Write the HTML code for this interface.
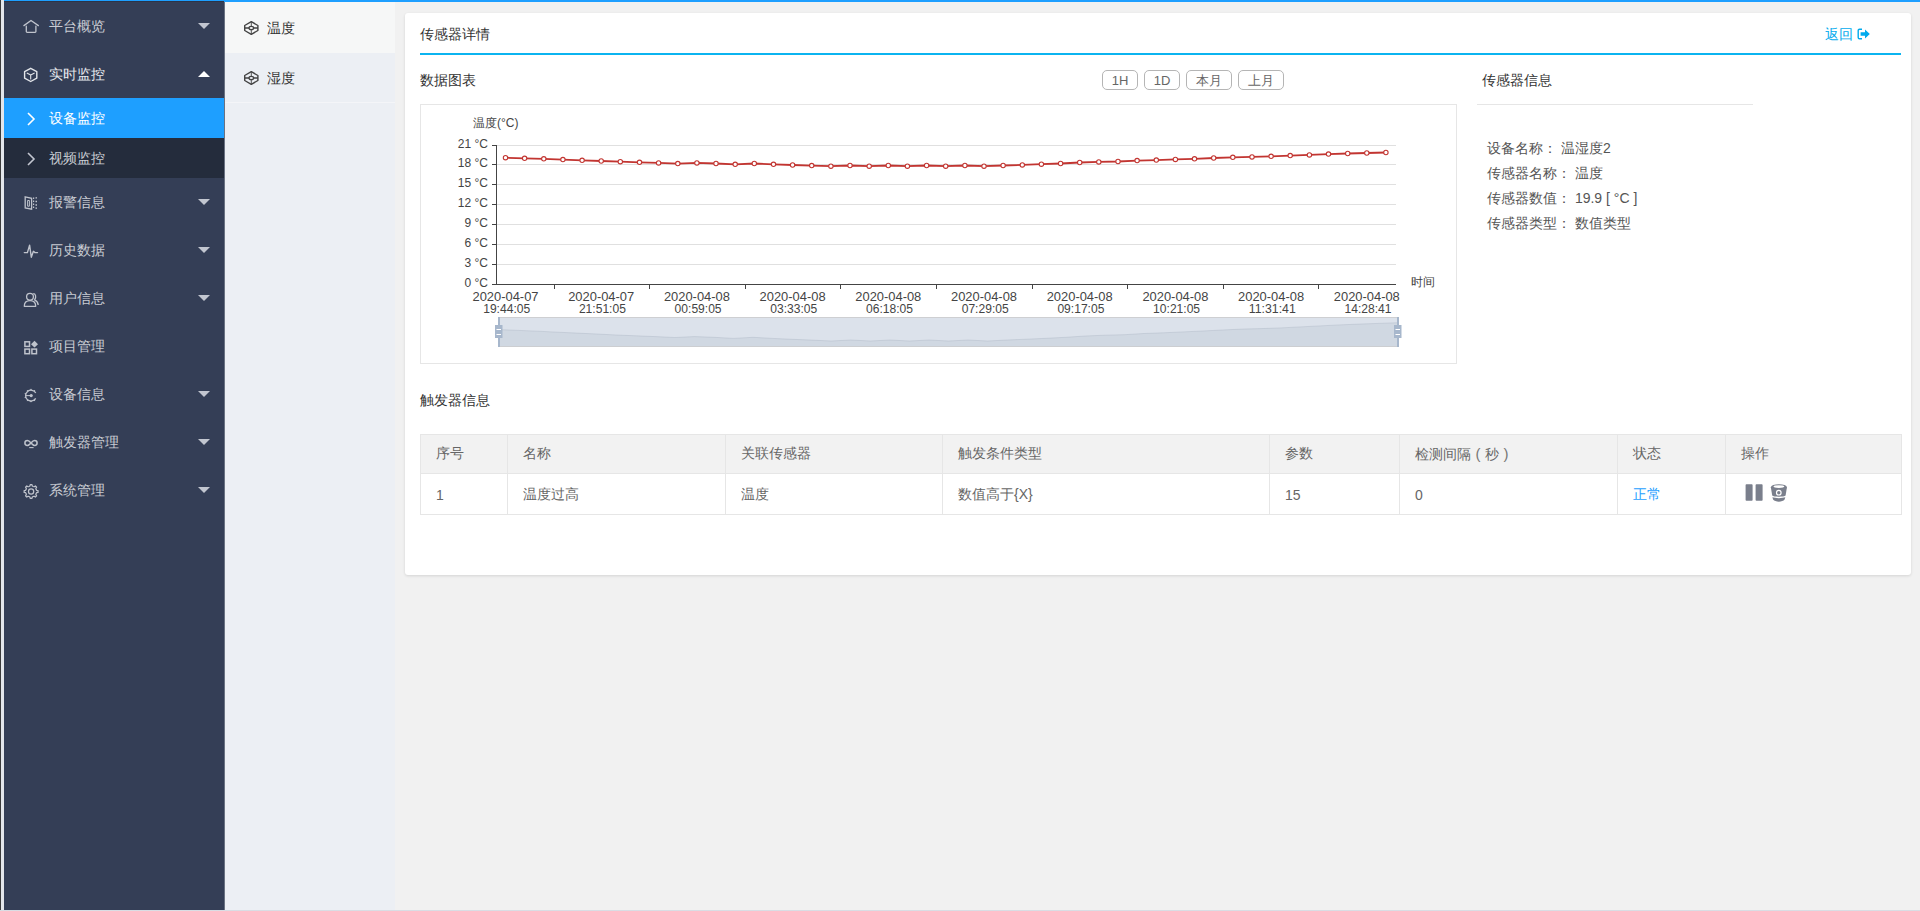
<!DOCTYPE html>
<html><head><meta charset="utf-8">
<style>
*{margin:0;padding:0;box-sizing:border-box}
html,body{width:1920px;height:911px;overflow:hidden;background:#f1f1f1;font-family:"Liberation Sans",sans-serif;}
.abs{position:absolute}
#topbar{position:absolute;left:0;top:0;width:1920px;height:2px;background:#1e9fff}
#lstrip0{position:absolute;left:0;top:0;width:1px;height:911px;background:#3a3a3a}
#lstrip{position:absolute;left:1px;top:0;width:3px;height:911px;background:#e3e6eb}
#side{position:absolute;left:4px;top:1px;width:220px;height:909px;background:#343e56;border-top:1px solid #2c3448}
.mi{position:absolute}
.mt{position:absolute;left:49px;height:20px;line-height:20px;font-size:14px;font-weight:500;color:#c9ccd3;white-space:nowrap}
.tri-d{position:absolute;left:198px;width:0;height:0;border-left:6px solid transparent;border-right:6px solid transparent;border-top:6px solid #c2c6d0}
.tri-u{position:absolute;left:198px;width:0;height:0;border-left:6px solid transparent;border-right:6px solid transparent;border-bottom:6px solid #fff}
#sub-act{position:absolute;left:0;top:96px;width:220px;height:40px;background:#1e9fff}
#sub-2{position:absolute;left:0;top:136px;width:220px;height:40px;background:#242c3c}
.st{position:absolute;left:49px;height:20px;line-height:20px;font-size:14px;font-weight:500;white-space:nowrap}
#panel{position:absolute;left:225px;top:2px;width:170px;height:908px;background:#eceff4}
#p1{position:absolute;left:0;top:0;width:170px;height:51px;background:#f6f7f7}
#p2{position:absolute;left:0;top:51px;width:170px;height:50px;border-bottom:1px solid #f4f5f8}
.pt{position:absolute;left:41px;height:20px;line-height:20px;font-size:14px;color:#333;white-space:nowrap}
#bottom{position:absolute;left:0;top:910px;width:1920px;height:1px;background:#d9dde4}
#card{position:absolute;left:405px;top:13px;width:1506px;height:562px;background:#fff;border-radius:3px;box-shadow:0 1px 3px rgba(0,0,0,0.12)}
.t14{position:absolute;font-size:14px;color:#333;white-space:nowrap;line-height:20px;height:20px}
#uline{position:absolute;left:420px;top:53px;width:1481px;height:2px;background:#0bb4f0}
.btn{position:absolute;top:70px;height:20px;border:1px solid #b5b5b5;border-radius:5px;font-size:13px;color:#666;line-height:19px;text-align:center;background:#fff}
#chartbox{position:absolute;left:420px;top:104px;width:1037px;height:260px;border:1px solid #e6e6e6}
svg text{font-family:"Liberation Sans",sans-serif}
.yl{font-size:12px;fill:#444}
.xl{font-size:12px;fill:#444}
#infoline{position:absolute;left:1477px;top:104px;width:276px;height:1px;background:#e6e6e6}
.info{position:absolute;left:1487px;font-size:14px;color:#555;white-space:nowrap;line-height:20px;height:20px}
table{position:absolute;left:420px;top:434px;border-collapse:collapse;width:1481px;table-layout:fixed}
td,th{border:1px solid #e6e6e6;font-weight:normal;text-align:left;padding:0 15px;font-size:14px;color:#666;white-space:nowrap}
th{background:#f2f2f2;height:39px}
.pw{display:inline-block;width:14px;text-align:center;font-size:15px;color:#777}
td{height:41px;padding-top:2px}
</style></head><body>
<div id="topbar"></div>
<div id="lstrip0"></div><div class="abs" style="left:224px;top:2px;width:1px;height:908px;background:#6a7282"></div><div id="lstrip"></div>
<div id="side">
<div id="sub-act"></div>
<div id="sub-2"></div>
</div>
<div class="abs" style="left:0;top:0;width:230px;height:911px">
<div class="mt" style="top:16px;color:#c9ccd3">平台概览</div>
<div class="tri-d" style="top:23px"></div>
<div class="mt" style="top:64px;color:#e8eaee">实时监控</div>
<div class="tri-u" style="top:71px"></div>
<div class="mt" style="top:192px;color:#c9ccd3">报警信息</div>
<div class="tri-d" style="top:199px"></div>
<div class="mt" style="top:240px;color:#c9ccd3">历史数据</div>
<div class="tri-d" style="top:247px"></div>
<div class="mt" style="top:288px;color:#c9ccd3">用户信息</div>
<div class="tri-d" style="top:295px"></div>
<div class="mt" style="top:336px;color:#c9ccd3">项目管理</div>
<div class="mt" style="top:384px;color:#c9ccd3">设备信息</div>
<div class="tri-d" style="top:391px"></div>
<div class="mt" style="top:432px;color:#c9ccd3">触发器管理</div>
<div class="tri-d" style="top:439px"></div>
<div class="mt" style="top:480px;color:#c9ccd3">系统管理</div>
<div class="tri-d" style="top:487px"></div>
<svg class="mi" style="left:0;top:0" width="230" height="520">
<g fill="none" stroke="#bfc3cc" stroke-width="1.3" stroke-linejoin="round" stroke-linecap="round">
<path d="M23.9 25.6 L31 20.5 L38.4 25.6"/>
<path d="M26.3 26.2 V31.6 Q26.3 32.4 27.1 32.4 H35.1 Q35.9 32.4 35.9 31.6 V26.2"/>
</g>
<g fill="none" stroke="#e4e6ea" stroke-linejoin="round">
<path d="M30.7 68.3 L36.8 71.7 V78.2 L30.7 81.5 L24.6 78.2 V71.7 Z" stroke-width="1.4"/>
<path d="M26.8 73 L30.7 75 L34.6 73 M30.7 75 V79.5" stroke-width="1.1"/>
</g>
<g fill="none" stroke="#bfc3cc">
<path d="M25.2 196.9 L31.6 198.3 V209.2 L25.2 208 Z" stroke-width="1.3"/>
<path d="M27.6 200.5 H29.4 V206.2 H27.6 Z" stroke-width="1"/>
<path d="M33.6 197.5 V209" stroke-width="1.2" stroke-dasharray="1.6 1.4"/>
<path d="M35.5 197.8 H37 M35.5 201.5 H37 M35.5 205 H37 M35.5 208.2 H37" stroke-width="1.3"/>
</g>
<polyline points="24.3,252.6 27.4,252.6 29.6,245.2 31.3,257.2 33.4,251.3 35,252.6 37.5,252.6" fill="none" stroke="#bfc3cc" stroke-width="1.4" stroke-linejoin="round" stroke-linecap="round"/>
<g fill="none" stroke="#bfc3cc" stroke-width="1.3" stroke-linejoin="round">
<circle cx="30" cy="296.7" r="3.4"/>
<path d="M24.3 306.3 C24.3 302.6 26.8 300.6 30 300.6 C33.2 300.6 35.7 302.6 35.7 306.3 Z"/>
<path d="M33.2 293.6 C35.6 293.6 36.6 296.8 34.6 299.8 C36.7 300.8 38 302.6 38.2 305"/>
</g>
<g fill="none" stroke="#bfc3cc" stroke-width="1.5">
<rect x="24.9" y="341.8" width="4.6" height="4.6"/>
<rect x="24.9" y="349.1" width="4.6" height="4.6"/>
<rect x="31.9" y="349.1" width="4.6" height="4.6"/>
</g>
<path d="M34.5 340.8 L38 344.2 L34.5 347.6 L31 344.2 Z" fill="#bfc3cc"/>
<g fill="none" stroke="#bfc3cc">
<path d="M35.77 393.06 A5.4 5.4 0 1 0 35.68 398.30" stroke-width="1.3"/>
<path d="M25.6 395.6 H31" stroke-width="1"/>
</g>
<path d="M35.06 391.88 L35.11 389.94 L33.28 390.58 Z M32.10 390.20 L31.00 388.60 L29.90 390.20 Z M28.72 390.58 L26.89 389.94 L26.94 391.88 Z M26.20 392.89 L24.34 393.44 L25.52 394.98 Z M25.52 396.22 L24.34 397.76 L26.20 398.31 Z M26.94 399.32 L26.89 401.26 L28.72 400.62 Z M29.90 401.00 L31.00 402.60 L32.10 401.00 Z M33.28 400.62 L35.11 401.26 L35.06 399.32 Z" fill="#bfc3cc"/>
<circle cx="31.2" cy="395.6" r="1.6" fill="#bfc3cc"/>
<g fill="none" stroke="#bfc3cc" stroke-width="1.5">
<path d="M31 443 C29.5 441.2 28.6 440.6 27.4 440.6 C25.9 440.6 24.9 441.7 24.9 443 C24.9 444.3 25.9 445.4 27.4 445.4 C28.6 445.4 29.5 444.8 31 443 C32.5 441.2 33.4 440.6 34.6 440.6 C36.1 440.6 37.1 441.7 37.1 443 C37.1 444.3 36.1 445.4 34.6 445.4 C33.4 445.4 32.5 444.8 31 443 Z"/>
<path d="M29.2 447.6 H33.6" stroke-width="1.1"/>
</g>
<g fill="none" stroke="#bfc3cc" stroke-width="1.25" stroke-linejoin="round">
<path d="M29.03 486.51 L29.88 486.03 L30.22 484.56 L31.98 484.56 L32.32 486.03 L33.17 486.51 L34.10 486.77 L35.39 485.97 L36.63 487.21 L35.83 488.50 L36.09 489.43 L36.57 490.28 L38.04 490.62 L38.04 492.38 L36.57 492.72 L36.09 493.57 L35.83 494.50 L36.63 495.79 L35.39 497.03 L34.10 496.23 L33.17 496.49 L32.32 496.97 L31.98 498.44 L30.22 498.44 L29.88 496.97 L29.03 496.49 L28.10 496.23 L26.81 497.03 L25.57 495.79 L26.37 494.50 L26.11 493.57 L25.63 492.72 L24.16 492.38 L24.16 490.62 L25.63 490.28 L26.11 489.43 L26.37 488.50 L25.57 487.21 L26.81 485.97 L28.10 486.77 Z"/>
<circle cx="31.1" cy="491.5" r="2.6"/>
</g>
</svg>
<svg class="mi" style="left:26px;top:111px" width="10" height="16" viewBox="0 0 10 16"><path d="M2 2 L8 8 L2 14" fill="none" stroke="#fff" stroke-width="1.6"/></svg>
<div class="st" style="top:108px;color:#fff">设备监控</div>
<svg class="mi" style="left:26px;top:151px" width="10" height="16" viewBox="0 0 10 16"><path d="M2 2 L8 8 L2 14" fill="none" stroke="#c2c6d0" stroke-width="1.6"/></svg>
<div class="st" style="top:148px;color:#c9ccd3">视频监控</div>
</div>
<div id="panel"><div id="p1"></div><div id="p2"></div></div>
<svg class="abs" style="left:244px;top:21px" width="15" height="15" viewBox="0 0 15 15"><g fill="none" stroke="#444" stroke-linejoin="round"><path d="M7.3 0.7 L13.9 4.5 V9.5 L7.3 13.3 L0.7 9.5 V4.5 Z" stroke-width="1.4"/><ellipse cx="7.3" cy="7" rx="2.3" ry="1.7" stroke-width="1.3"/><path d="M7.3 0.7 V5.3 M7.3 8.7 V13.3" stroke-width="0.9"/><path d="M0.7 7 H5 M9.6 7 H13.9" stroke-width="1.6"/></g></svg>
<div class="pt" style="left:267px;top:18px">温度</div>
<svg class="abs" style="left:244px;top:71px" width="15" height="15" viewBox="0 0 15 15"><g fill="none" stroke="#444" stroke-linejoin="round"><path d="M7.3 0.7 L13.9 4.5 V9.5 L7.3 13.3 L0.7 9.5 V4.5 Z" stroke-width="1.4"/><ellipse cx="7.3" cy="7" rx="2.3" ry="1.7" stroke-width="1.3"/><path d="M7.3 0.7 V5.3 M7.3 8.7 V13.3" stroke-width="0.9"/><path d="M0.7 7 H5 M9.6 7 H13.9" stroke-width="1.6"/></g></svg>
<div class="pt" style="left:267px;top:68px">湿度</div>
<div id="bottom"></div>

<div id="card"></div>
<div class="t14" style="left:420px;top:24px">传感器详情</div>
<div class="t14" style="left:1825px;top:24px;color:#01aaed">返回</div>
<svg class="abs" style="left:1857px;top:28px" width="14" height="12" viewBox="0 0 14 12"><path d="M5 1.2 H2.5 Q1.2 1.2 1.2 2.5 V9.5 Q1.2 10.8 2.5 10.8 H5" fill="none" stroke="#01aaed" stroke-width="1.4"/><path d="M3.6 4.3 H8 V1.5 L12.8 6 L8 10.5 V7.7 H3.6 Z" fill="#01aaed"/></svg>
<div id="uline"></div>
<div class="t14" style="left:420px;top:70px">数据图表</div>
<div class="btn" style="left:1102px;width:36px">1H</div>
<div class="btn" style="left:1144px;width:36px">1D</div>
<div class="btn" style="left:1186px;width:46px">本月</div>
<div class="btn" style="left:1238px;width:46px">上月</div>
<div id="chartbox"></div>
<svg class="abs" style="left:0;top:0" width="1920" height="911">
<line x1="492" y1="284.5" x2="497" y2="284.5" stroke="#444" stroke-width="1"/>
<text x="488" y="287.0" text-anchor="end" class="yl">0 °C</text>
<line x1="497" y1="264.5" x2="1396" y2="264.5" stroke="#e0e0e0" stroke-width="1"/>
<line x1="492" y1="264.5" x2="497" y2="264.5" stroke="#444" stroke-width="1"/>
<text x="488" y="267.0" text-anchor="end" class="yl">3 °C</text>
<line x1="497" y1="244.5" x2="1396" y2="244.5" stroke="#e0e0e0" stroke-width="1"/>
<line x1="492" y1="244.5" x2="497" y2="244.5" stroke="#444" stroke-width="1"/>
<text x="488" y="247.0" text-anchor="end" class="yl">6 °C</text>
<line x1="497" y1="224.5" x2="1396" y2="224.5" stroke="#e0e0e0" stroke-width="1"/>
<line x1="492" y1="224.5" x2="497" y2="224.5" stroke="#444" stroke-width="1"/>
<text x="488" y="227.0" text-anchor="end" class="yl">9 °C</text>
<line x1="497" y1="204.5" x2="1396" y2="204.5" stroke="#e0e0e0" stroke-width="1"/>
<line x1="492" y1="204.5" x2="497" y2="204.5" stroke="#444" stroke-width="1"/>
<text x="488" y="207.0" text-anchor="end" class="yl">12 °C</text>
<line x1="497" y1="184.5" x2="1396" y2="184.5" stroke="#e0e0e0" stroke-width="1"/>
<line x1="492" y1="184.5" x2="497" y2="184.5" stroke="#444" stroke-width="1"/>
<text x="488" y="187.0" text-anchor="end" class="yl">15 °C</text>
<line x1="497" y1="164.5" x2="1396" y2="164.5" stroke="#e0e0e0" stroke-width="1"/>
<line x1="492" y1="164.5" x2="497" y2="164.5" stroke="#444" stroke-width="1"/>
<text x="488" y="167.0" text-anchor="end" class="yl">18 °C</text>
<line x1="497" y1="145.5" x2="1396" y2="145.5" stroke="#e0e0e0" stroke-width="1"/>
<line x1="492" y1="145.5" x2="497" y2="145.5" stroke="#444" stroke-width="1"/>
<text x="488" y="148.0" text-anchor="end" class="yl">21 °C</text>
<line x1="496.5" y1="145" x2="496.5" y2="284.5" stroke="#444" stroke-width="1"/>
<line x1="496" y1="284.5" x2="1396" y2="284.5" stroke="#444" stroke-width="1"/>
<line x1="554.5" y1="284" x2="554.5" y2="289" stroke="#444" stroke-width="1"/>
<line x1="649.5" y1="284" x2="649.5" y2="289" stroke="#444" stroke-width="1"/>
<line x1="745.5" y1="284" x2="745.5" y2="289" stroke="#444" stroke-width="1"/>
<line x1="840.5" y1="284" x2="840.5" y2="289" stroke="#444" stroke-width="1"/>
<line x1="936.5" y1="284" x2="936.5" y2="289" stroke="#444" stroke-width="1"/>
<line x1="1032.5" y1="284" x2="1032.5" y2="289" stroke="#444" stroke-width="1"/>
<line x1="1127.5" y1="284" x2="1127.5" y2="289" stroke="#444" stroke-width="1"/>
<line x1="1223.5" y1="284" x2="1223.5" y2="289" stroke="#444" stroke-width="1"/>
<line x1="1318.5" y1="284" x2="1318.5" y2="289" stroke="#444" stroke-width="1"/>
<text x="505.5" y="300.5" text-anchor="middle" class="xl" textLength="66" lengthAdjust="spacingAndGlyphs">2020-04-07</text>
<text x="506.7" y="312.5" text-anchor="middle" class="xl" textLength="47" lengthAdjust="spacingAndGlyphs">19:44:05</text>
<text x="601.2" y="300.5" text-anchor="middle" class="xl" textLength="66" lengthAdjust="spacingAndGlyphs">2020-04-07</text>
<text x="602.4" y="312.5" text-anchor="middle" class="xl" textLength="47" lengthAdjust="spacingAndGlyphs">21:51:05</text>
<text x="696.9" y="300.5" text-anchor="middle" class="xl" textLength="66" lengthAdjust="spacingAndGlyphs">2020-04-08</text>
<text x="698.1" y="312.5" text-anchor="middle" class="xl" textLength="47" lengthAdjust="spacingAndGlyphs">00:59:05</text>
<text x="792.6" y="300.5" text-anchor="middle" class="xl" textLength="66" lengthAdjust="spacingAndGlyphs">2020-04-08</text>
<text x="793.8" y="312.5" text-anchor="middle" class="xl" textLength="47" lengthAdjust="spacingAndGlyphs">03:33:05</text>
<text x="888.3" y="300.5" text-anchor="middle" class="xl" textLength="66" lengthAdjust="spacingAndGlyphs">2020-04-08</text>
<text x="889.5" y="312.5" text-anchor="middle" class="xl" textLength="47" lengthAdjust="spacingAndGlyphs">06:18:05</text>
<text x="984.0" y="300.5" text-anchor="middle" class="xl" textLength="66" lengthAdjust="spacingAndGlyphs">2020-04-08</text>
<text x="985.2" y="312.5" text-anchor="middle" class="xl" textLength="47" lengthAdjust="spacingAndGlyphs">07:29:05</text>
<text x="1079.7" y="300.5" text-anchor="middle" class="xl" textLength="66" lengthAdjust="spacingAndGlyphs">2020-04-08</text>
<text x="1080.9" y="312.5" text-anchor="middle" class="xl" textLength="47" lengthAdjust="spacingAndGlyphs">09:17:05</text>
<text x="1175.4" y="300.5" text-anchor="middle" class="xl" textLength="66" lengthAdjust="spacingAndGlyphs">2020-04-08</text>
<text x="1176.6" y="312.5" text-anchor="middle" class="xl" textLength="47" lengthAdjust="spacingAndGlyphs">10:21:05</text>
<text x="1271.1" y="300.5" text-anchor="middle" class="xl" textLength="66" lengthAdjust="spacingAndGlyphs">2020-04-08</text>
<text x="1272.3" y="312.5" text-anchor="middle" class="xl" textLength="47" lengthAdjust="spacingAndGlyphs">11:31:41</text>
<text x="1366.8" y="300.5" text-anchor="middle" class="xl" textLength="66" lengthAdjust="spacingAndGlyphs">2020-04-08</text>
<text x="1368.0" y="312.5" text-anchor="middle" class="xl" textLength="47" lengthAdjust="spacingAndGlyphs">14:28:41</text>
<text x="473" y="126.5" class="yl">温度(°C)</text>
<text x="1411" y="286" class="yl">时间</text>
<polyline points="505.5,157.7 524.6,158.3 543.8,158.8 562.9,159.6 582.1,160.3 601.2,161.0 620.3,161.7 639.5,162.3 658.6,162.9 677.8,163.6 696.9,162.9 716.0,163.5 735.2,164.3 754.3,163.5 773.5,164.3 792.6,165.0 811.7,165.6 830.9,166.2 850.0,165.5 869.2,166.2 888.3,165.5 907.4,166.2 926.6,165.5 945.7,166.2 964.9,165.5 984.0,166.2 1003.1,165.5 1022.3,164.9 1041.4,164.2 1060.6,163.5 1079.7,162.5 1098.8,161.9 1118.0,161.5 1137.1,160.6 1156.3,160.1 1175.4,159.4 1194.5,158.8 1213.7,158.0 1232.8,157.3 1252.0,156.9 1271.1,156.3 1290.2,155.6 1309.4,154.9 1328.5,154.1 1347.7,153.5 1366.8,153.0 1385.9,152.5" fill="none" stroke="#c23531" stroke-width="1.8" stroke-linejoin="round"/>
<circle cx="505.5" cy="157.7" r="2.2" fill="#fff" stroke="#c23531" stroke-width="1.1"/>
<circle cx="524.6" cy="158.3" r="2.2" fill="#fff" stroke="#c23531" stroke-width="1.1"/>
<circle cx="543.8" cy="158.8" r="2.2" fill="#fff" stroke="#c23531" stroke-width="1.1"/>
<circle cx="562.9" cy="159.6" r="2.2" fill="#fff" stroke="#c23531" stroke-width="1.1"/>
<circle cx="582.1" cy="160.3" r="2.2" fill="#fff" stroke="#c23531" stroke-width="1.1"/>
<circle cx="601.2" cy="161.0" r="2.2" fill="#fff" stroke="#c23531" stroke-width="1.1"/>
<circle cx="620.3" cy="161.7" r="2.2" fill="#fff" stroke="#c23531" stroke-width="1.1"/>
<circle cx="639.5" cy="162.3" r="2.2" fill="#fff" stroke="#c23531" stroke-width="1.1"/>
<circle cx="658.6" cy="162.9" r="2.2" fill="#fff" stroke="#c23531" stroke-width="1.1"/>
<circle cx="677.8" cy="163.6" r="2.2" fill="#fff" stroke="#c23531" stroke-width="1.1"/>
<circle cx="696.9" cy="162.9" r="2.2" fill="#fff" stroke="#c23531" stroke-width="1.1"/>
<circle cx="716.0" cy="163.5" r="2.2" fill="#fff" stroke="#c23531" stroke-width="1.1"/>
<circle cx="735.2" cy="164.3" r="2.2" fill="#fff" stroke="#c23531" stroke-width="1.1"/>
<circle cx="754.3" cy="163.5" r="2.2" fill="#fff" stroke="#c23531" stroke-width="1.1"/>
<circle cx="773.5" cy="164.3" r="2.2" fill="#fff" stroke="#c23531" stroke-width="1.1"/>
<circle cx="792.6" cy="165.0" r="2.2" fill="#fff" stroke="#c23531" stroke-width="1.1"/>
<circle cx="811.7" cy="165.6" r="2.2" fill="#fff" stroke="#c23531" stroke-width="1.1"/>
<circle cx="830.9" cy="166.2" r="2.2" fill="#fff" stroke="#c23531" stroke-width="1.1"/>
<circle cx="850.0" cy="165.5" r="2.2" fill="#fff" stroke="#c23531" stroke-width="1.1"/>
<circle cx="869.2" cy="166.2" r="2.2" fill="#fff" stroke="#c23531" stroke-width="1.1"/>
<circle cx="888.3" cy="165.5" r="2.2" fill="#fff" stroke="#c23531" stroke-width="1.1"/>
<circle cx="907.4" cy="166.2" r="2.2" fill="#fff" stroke="#c23531" stroke-width="1.1"/>
<circle cx="926.6" cy="165.5" r="2.2" fill="#fff" stroke="#c23531" stroke-width="1.1"/>
<circle cx="945.7" cy="166.2" r="2.2" fill="#fff" stroke="#c23531" stroke-width="1.1"/>
<circle cx="964.9" cy="165.5" r="2.2" fill="#fff" stroke="#c23531" stroke-width="1.1"/>
<circle cx="984.0" cy="166.2" r="2.2" fill="#fff" stroke="#c23531" stroke-width="1.1"/>
<circle cx="1003.1" cy="165.5" r="2.2" fill="#fff" stroke="#c23531" stroke-width="1.1"/>
<circle cx="1022.3" cy="164.9" r="2.2" fill="#fff" stroke="#c23531" stroke-width="1.1"/>
<circle cx="1041.4" cy="164.2" r="2.2" fill="#fff" stroke="#c23531" stroke-width="1.1"/>
<circle cx="1060.6" cy="163.5" r="2.2" fill="#fff" stroke="#c23531" stroke-width="1.1"/>
<circle cx="1079.7" cy="162.5" r="2.2" fill="#fff" stroke="#c23531" stroke-width="1.1"/>
<circle cx="1098.8" cy="161.9" r="2.2" fill="#fff" stroke="#c23531" stroke-width="1.1"/>
<circle cx="1118.0" cy="161.5" r="2.2" fill="#fff" stroke="#c23531" stroke-width="1.1"/>
<circle cx="1137.1" cy="160.6" r="2.2" fill="#fff" stroke="#c23531" stroke-width="1.1"/>
<circle cx="1156.3" cy="160.1" r="2.2" fill="#fff" stroke="#c23531" stroke-width="1.1"/>
<circle cx="1175.4" cy="159.4" r="2.2" fill="#fff" stroke="#c23531" stroke-width="1.1"/>
<circle cx="1194.5" cy="158.8" r="2.2" fill="#fff" stroke="#c23531" stroke-width="1.1"/>
<circle cx="1213.7" cy="158.0" r="2.2" fill="#fff" stroke="#c23531" stroke-width="1.1"/>
<circle cx="1232.8" cy="157.3" r="2.2" fill="#fff" stroke="#c23531" stroke-width="1.1"/>
<circle cx="1252.0" cy="156.9" r="2.2" fill="#fff" stroke="#c23531" stroke-width="1.1"/>
<circle cx="1271.1" cy="156.3" r="2.2" fill="#fff" stroke="#c23531" stroke-width="1.1"/>
<circle cx="1290.2" cy="155.6" r="2.2" fill="#fff" stroke="#c23531" stroke-width="1.1"/>
<circle cx="1309.4" cy="154.9" r="2.2" fill="#fff" stroke="#c23531" stroke-width="1.1"/>
<circle cx="1328.5" cy="154.1" r="2.2" fill="#fff" stroke="#c23531" stroke-width="1.1"/>
<circle cx="1347.7" cy="153.5" r="2.2" fill="#fff" stroke="#c23531" stroke-width="1.1"/>
<circle cx="1366.8" cy="153.0" r="2.2" fill="#fff" stroke="#c23531" stroke-width="1.1"/>
<circle cx="1385.9" cy="152.5" r="2.2" fill="#fff" stroke="#c23531" stroke-width="1.1"/>
<polygon points="499,346.5 499.0,329.6 518.5,330.4 538.1,331.2 557.6,332.2 577.2,333.1 596.7,334.0 616.3,335.0 635.8,335.8 655.3,336.6 674.9,337.5 694.4,336.6 714.0,337.3 733.5,338.4 753.1,337.3 772.6,338.4 792.2,339.3 811.7,340.1 831.2,341.0 850.8,340.0 870.3,341.0 889.9,340.0 909.4,341.0 929.0,340.0 948.5,341.0 968.0,340.0 987.6,341.0 1007.1,340.0 1026.7,339.2 1046.2,338.3 1065.8,337.3 1085.3,336.0 1104.8,335.2 1124.4,334.7 1143.9,333.5 1163.5,332.8 1183.0,331.9 1202.6,331.0 1222.1,330.0 1241.7,329.1 1261.2,328.6 1280.7,327.9 1300.3,326.9 1319.8,325.9 1339.4,324.9 1358.9,324.1 1378.5,323.4 1398.0,322.7 1398,346.5" fill="rgba(47,69,84,0.09)" stroke="none"/>
<polyline points="499.0,329.6 518.5,330.4 538.1,331.2 557.6,332.2 577.2,333.1 596.7,334.0 616.3,335.0 635.8,335.8 655.3,336.6 674.9,337.5 694.4,336.6 714.0,337.3 733.5,338.4 753.1,337.3 772.6,338.4 792.2,339.3 811.7,340.1 831.2,341.0 850.8,340.0 870.3,341.0 889.9,340.0 909.4,341.0 929.0,340.0 948.5,341.0 968.0,340.0 987.6,341.0 1007.1,340.0 1026.7,339.2 1046.2,338.3 1065.8,337.3 1085.3,336.0 1104.8,335.2 1124.4,334.7 1143.9,333.5 1163.5,332.8 1183.0,331.9 1202.6,331.0 1222.1,330.0 1241.7,329.1 1261.2,328.6 1280.7,327.9 1300.3,326.9 1319.8,325.9 1339.4,324.9 1358.9,324.1 1378.5,323.4 1398.0,322.7" fill="none" stroke="rgba(47,69,84,0.15)" stroke-width="1"/>
<rect x="499" y="317" width="899" height="30" fill="rgba(167,183,204,0.4)"/>
<rect x="498.5" y="317.5" width="900" height="29" fill="none" stroke="rgba(200,200,200,0.7)" stroke-width="1"/>
<rect x="498" y="317" width="2" height="30" fill="#a7b7cc"/>
<rect x="495" y="325" width="7.5" height="13" fill="#a7b7cc"/>
<rect x="496.5" y="329" width="4.5" height="1" fill="#fff"/>
<rect x="496.5" y="334" width="4.5" height="1" fill="#fff"/>
<rect x="1397" y="317" width="2" height="30" fill="#a7b7cc"/>
<rect x="1394" y="325" width="7.5" height="13" fill="#a7b7cc"/>
<rect x="1395.5" y="329" width="4.5" height="1" fill="#fff"/>
<rect x="1395.5" y="334" width="4.5" height="1" fill="#fff"/>
</svg>
<div class="t14" style="left:1482px;top:70px">传感器信息</div>
<div id="infoline"></div>
<div class="info" style="top:138px">设备名称： 温湿度2</div>
<div class="info" style="top:163px">传感器名称： 温度</div>
<div class="info" style="top:188px">传感器数值： 19.9 [ °C ]</div>
<div class="info" style="top:213px">传感器类型： 数值类型</div>
<div class="t14" style="left:420px;top:390px">触发器信息</div>
<table>
<colgroup><col style="width:87px"><col style="width:218px"><col style="width:217px"><col style="width:327px"><col style="width:130px"><col style="width:218px"><col style="width:108px"><col style="width:176px"></colgroup>
<tr><th>序号</th><th>名称</th><th>关联传感器</th><th>触发条件类型</th><th>参数</th><th>检测间隔<span class="pw">(</span>秒<span class="pw">)</span></th><th>状态</th><th>操作</th></tr>
<tr><td>1</td><td>温度过高</td><td>温度</td><td>数值高于{X}</td><td>15</td><td>0</td><td style="color:#1e9fff">正常</td><td></td></tr>
</table>
<svg class="abs" style="left:1745px;top:484px" width="18" height="17" viewBox="0 0 18 17"><rect x="0.6" y="0.2" width="7" height="16.6" rx="0.8" fill="#7a7f8c"/><rect x="10.6" y="0.2" width="7" height="16.6" rx="0.8" fill="#7a7f8c"/></svg>
<svg class="abs" style="left:1770px;top:484px" width="18" height="18" viewBox="0 0 18 18"><ellipse cx="8.9" cy="3.2" rx="8" ry="3" fill="#7a7f8c"/><path d="M0.9 3.4 H16.9 L15.6 11.6 C14.5 13.2 3.3 13.2 2.2 11.6 Z" fill="#7a7f8c"/><ellipse cx="8.9" cy="2.6" rx="5.4" ry="1.3" fill="#fff"/><circle cx="8.8" cy="8.7" r="2.3" fill="none" stroke="#fff" stroke-width="1.2"/><circle cx="8.8" cy="8.7" r="0.9" fill="#7a7f8c"/><path d="M2.4 13.3 C5 14.4 12.6 14.4 15.3 13.3 L14.6 15.6 C12.5 18.4 5.2 18.4 3.1 15.6 Z" fill="#7a7f8c"/></svg>
</body></html>
